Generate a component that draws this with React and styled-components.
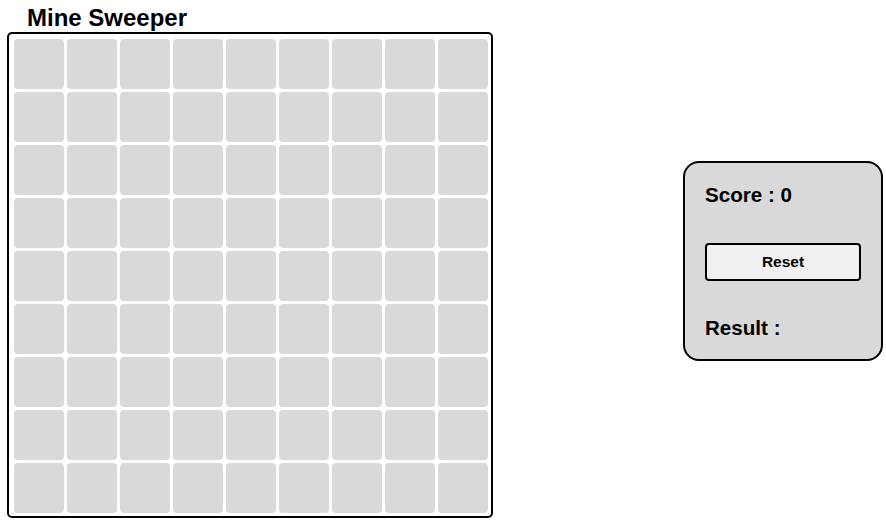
import React from "react";
import styled, { createGlobalStyle } from "styled-components";

const Global = createGlobalStyle`
  html, body { margin: 0; padding: 0; background: #ffffff; }
  body { font-family: "Liberation Sans", Arial, sans-serif; color: #000; }
`;

const Page = styled.div`
  display: flex;
  align-items: center;
  justify-content: space-between;
  padding: 4px 3px 0 7px;
  width: 886px;
  box-sizing: border-box;
`;

const GameColumn = styled.div`
  display: flex;
  flex-direction: column;
`;

const Title = styled.h1`
  margin: 0;
  padding-left: 20px;
  font-size: 24px;
  line-height: 28px;
  font-weight: bold;
`;

const Board = styled.div`
  display: grid;
  grid-template-columns: repeat(9, 50px);
  grid-auto-rows: 50px;
  gap: 3px;
  width: 486px;
  height: 486px;
  box-sizing: border-box;
  padding: 5px 3px 3px 5px;
  border: 2px solid #000;
  border-radius: 5px;
`;

const Cell = styled.div`
  background: #d9d9d9;
  border-radius: 4px;
`;

const Panel = styled.div`
  display: flex;
  flex-direction: column;
  justify-content: space-between;
  width: 200px;
  height: 200px;
  box-sizing: border-box;
  padding: 20px 20px 19px;
  background: #d9d9d9;
  border: 2px solid #000;
  border-radius: 16px;
`;

const Label = styled.div`
  font-size: 20.6px;
  line-height: 24px;
  font-weight: bold;
`;

const ResetButton = styled.button`
  width: 156px;
  height: 38px;
  box-sizing: border-box;
  background: #f1f1f1;
  border: 2px solid #000;
  border-radius: 4px;
  font-family: "Liberation Sans", Arial, sans-serif;
  font-size: 15.5px;
  font-weight: bold;
  color: #000;
  padding: 0;
  cursor: pointer;
`;

export default function App() {
  const cells = Array.from({ length: 81 }, (_, i) => i);
  return (
    <>
      <Global />
      <Page>
        <GameColumn>
          <Title>Mine Sweeper</Title>
          <Board>
            {cells.map((i) => (
              <Cell key={i} />
            ))}
          </Board>
        </GameColumn>
        <Panel>
          <Label>Score : 0</Label>
          <ResetButton>Reset</ResetButton>
          <Label>Result :</Label>
        </Panel>
      </Page>
    </>
  );
}
